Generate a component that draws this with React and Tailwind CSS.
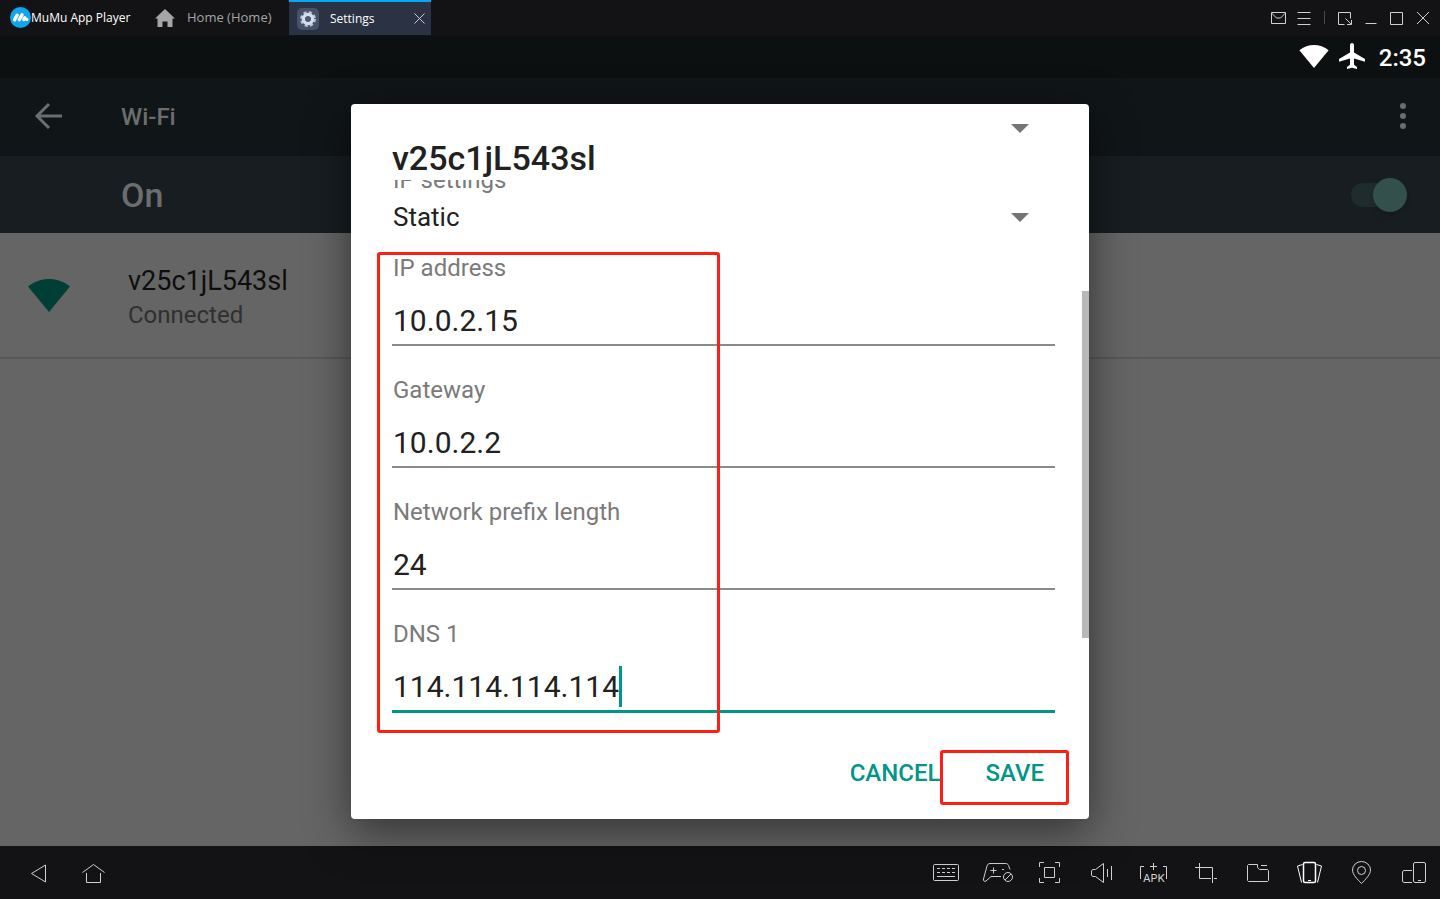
import { useState } from "react";

const iconProps = {
  fill: "none",
  stroke: "currentColor",
  strokeWidth: 1,
  "aria-hidden": true,
};

const windowButtons = [
  { label: "Messages", d: "M1.5 2.5h14v11h-14zM1.5 3l5 5h4l5-5" },
  { label: "Menu", d: "M1.5 2.5h13M1.5 8.5h13M1.5 14.5h13" },
  { label: "Mini mode", d: "M7.5 14.5h-6v-12h12v6M8.5 8.5l5.5 5.5M14.5 10v4.5H10" },
  { label: "Minimize", d: "M2.5 13.5h11" },
  { label: "Maximize", d: "M1.5 2.5h12v12h-12z" },
  { label: "Close", d: "M2 2l12 12M14 2L2 14" },
];

const tools = [
  {
    label: "Keyboard",
    icon: (
      <>
        <rect x="13.5" y="18.5" width="25" height="16" rx="1" />
        <path d="M17 22.5h18M17 26.5h18" strokeDasharray="3 2" />
        <path d="M17 30.5h18" />
      </>
    ),
  },
  {
    label: "Gamepad",
    icon: (
      <>
        <path d="M29 30.5H19L14 35c-1.5 1-3 0-2.500-2L15 20c.5-1.500 1.500-2.500 3-2.500h15c2 0 3 .5 3.500 2l1.500 4" />
        <path d="M18.500 24.500h6M21.500 21.500v6M30 23.500h2" />
        <circle cx="36" cy="31" r="4.500" />
        <path d="M33 34l6-6" />
      </>
    ),
  },
  {
    label: "Full screen",
    icon: (
      <path d="M15.500 21v-4.500H20M31 16.500h4.500V21M35.500 32v4.500H31M20 36.500h-4.500V32M20.500 21.500h10v10h-10z" />
    ),
  },
  {
    label: "Volume",
    icon: (
      <path d="M16.500 23.500h3l8-6v19l-8-6h-3l-1-1.500v-4zM31.500 23v8M35.500 20v14" />
    ),
  },
  {
    label: "Install APK",
    icon: (
      <>
        <path d="M16 20.500h-3.500V33M35 20.500h3.500V33M22 20.500h7M25.500 17v7" />
        <text x="26" y="36" textAnchor="middle" fontSize="11" fill="currentColor" stroke="none">
          APK
        </text>
      </>
    ),
  },
  {
    label: "Screenshot",
    icon: <path d="M15 21.500h17.500V37M19.500 17v15.500H31M34 32.500h3" />,
  },
  {
    label: "Shared folder",
    icon: (
      <>
        <path d="M16.500 18.500h9v3l2 2h8l1 1v10l-1 1h-19l-1-1v-15z" />
        <path d="M29 19.500h6" />
      </>
    ),
  },
  {
    label: "Shake",
    icon: (
      <>
        <rect x="19.500" y="16.500" width="12" height="20" rx="1.500" stroke="#fff" strokeWidth="1.500" />
        <path d="M18.500 18.500l-5 1.500 4 16.500M32.500 18.500l5 1.500-4 16.500M24 34.500h3" stroke="#fff" />
      </>
    ),
  },
  {
    label: "Location",
    icon: (
      <>
        <path d="M25.500 37.500c-4-4-9-9-9-13.500a9 8.500 0 0 1 18 0c0 4.500-5 9.500-9 13.500z" />
        <circle cx="25.500" cy="24.500" r="4" />
      </>
    ),
  },
  {
    label: "Rotate",
    icon: (
      <>
        <rect x="25.500" y="16.500" width="12" height="20" rx="1.500" />
        <path d="M24 24.500h-8l-1.500 1v10l1.500 1h8M30 34.500h3" />
      </>
    ),
  },
];

const Wifi = ({ className }) => (
  <svg viewBox="0 0 42 33" className={className} fill="currentColor" aria-hidden="true">
    <path d="M0 7.500C12-2.500 30-2.500 42 7.500L21 33z" />
  </svg>
);

const TitleBar = () => (
  <header className="flex h-9 items-start bg-[#131315] font-['Open_Sans',sans-serif] text-[12px] text-white">
    <div className="flex h-[35px] w-[127px] items-center pl-[10px] whitespace-nowrap">
      <svg viewBox="0 0 21 21" className="h-[21px] w-[21px] shrink-0" aria-hidden="true">
        <circle cx="10.500" cy="10.500" r="10.500" fill="#0fa5ef" />
        <path d="M4.500 12.800l2.600-4.600M9.300 12.800l2.700-5M13.800 12.500l1-1.800" stroke="#fff" strokeWidth="3.400" strokeLinecap="round" />
        <circle cx="16.800" cy="12.500" r="1.700" fill="#fff" />
      </svg>
      <span>MuMu App Player</span>
    </div>

    <nav className="flex h-[35px]">
      <button className="flex w-[162px] cursor-pointer items-center gap-3 pl-7 text-[13px] text-[#a5a5a5]">
        <svg viewBox="0 0 20 18" className="h-[18px] w-5" fill="currentColor" aria-hidden="true">
          <path d="M10 0l10 9.500h-2.500V18h-5v-5.500h-5V18h-5V9.500H0z" />
        </svg>
        <span>Home (Home)</span>
      </button>
      <div className="flex w-[142px] items-center border-t-2 border-[#03a9f4] bg-[#2b3244] pr-1 pl-2">
        <button className="flex flex-1 cursor-pointer items-center gap-[11px]">
          <svg viewBox="0 0 22 22" className="h-[22px] w-[22px]" aria-hidden="true">
            <rect width="22" height="22" rx="5" fill="#465269" />
            <circle cx="11" cy="11" r="6.500" fill="none" stroke="#b5c0d6" strokeWidth="3" strokeDasharray="3 2.100" />
            <circle cx="11" cy="11" r="4.500" fill="none" stroke="#d5dceb" strokeWidth="3.500" />
            <circle cx="11" cy="11" r="2.800" fill="#4c5870" />
          </svg>
          <span>Settings</span>
        </button>
        <button aria-label="Close tab" className="cursor-pointer p-[2px] text-[#c9ccd3]">
          <svg viewBox="0 0 11 11" className="h-[11px] w-[11px]" {...iconProps}>
            <path d="M.5.5l10 10M10.500.5l-10 10" />
          </svg>
        </button>
      </div>
    </nav>

    <div className="ml-auto flex h-[35px] items-center pr-1 text-[#d0d0d0]">
      {windowButtons.map((b, i) => (
        <div key={b.label} className="flex items-center">
          {i === 2 && <span className="mx-[7px] h-[13px] w-px bg-[#4a4a4c]" />}
          <button aria-label={b.label} className="flex w-[26px] cursor-pointer justify-center">
            <svg viewBox="0 0 16 16" className="h-4 w-4" {...iconProps}>
              <path d={b.d} />
            </svg>
          </button>
        </div>
      ))}
    </div>
  </header>
);

const StatusBar = () => (
  <div className="flex h-[42px] items-center justify-end gap-[14px] bg-[#0c1010] pr-[14px] text-white">
    <div className="flex items-center gap-[10px] pb-[2px]">
      <Wifi className="h-[23px] w-[30px]" />
      <svg viewBox="0 0 26 26" className="h-[26px] w-[26px]" fill="currentColor" aria-hidden="true">
        <path d="M13 0c-1.200 0-2 1-2 2.200v7.300L0 16v2.800L11 15.500v6.300l-3 2.200V26l5-1.300 5 1.300v-2l-3-2.200v-6.300l11 3.300V16l-11-6.500V2.200C15 1 14.200 0 13 0z" />
      </svg>
    </div>
    <span className="pt-[2px] text-[24px] leading-7 font-medium">2:35</span>
  </div>
);

const WifiPage = () => {
  const [on, setOn] = useState(true);

  return (
    <>
      <div className="flex h-[78px] items-center bg-[#101517] pr-[34px] pl-[34px] text-[#6b6d6e]">
        <button aria-label="Back" className="w-[87px] cursor-pointer pb-[2px]">
          <svg viewBox="0 0 28 28" className="h-7 w-7" {...iconProps} strokeWidth="3">
            <path d="M28 14H3M15 2L3 14l12 12" />
          </svg>
        </button>
        <h1 className="flex-1 text-[24px] leading-7 font-medium">Wi-Fi</h1>
        <button aria-label="More options" className="cursor-pointer pb-[2px]">
          <svg viewBox="0 0 6 28" className="h-7 w-[6px]" fill="currentColor" aria-hidden="true">
            <circle cx="3" cy="4" r="3" />
            <circle cx="3" cy="14" r="3" />
            <circle cx="3" cy="24" r="3" />
          </svg>
        </button>
      </div>

      <label className="flex h-[77px] cursor-pointer items-center justify-between bg-[#171d21] pr-[33px] pl-[121px] text-[#6b6d6e]">
        <span className="text-[34px] leading-10 font-medium">{on ? "On" : "Off"}</span>
        <input type="checkbox" className="peer sr-only" checked={on} onChange={() => setOn(!on)} />
        <span className="flex h-6 w-14 items-center rounded-full bg-[#1f2b2d] peer-checked:justify-end">
          <span className="h-[34px] w-[34px] rounded-full bg-[#34504c] shadow-md" />
        </span>
      </label>

      <a href="#network" className="flex h-[126px] items-center gap-[58px] border-b-2 border-[#585858] pl-7">
        <Wifi className="h-[33px] w-[42px] text-[#003f36]" />
        <span className="pt-1">
          <span className="block text-[27px] leading-8 text-[#0e0e0e]">v25c1jL543sl</span>
          <span className="mt-1 block text-[24px] leading-7 text-[#303030]">Connected</span>
        </span>
      </a>
    </>
  );
};

const Dropdown = ({ id, label, options, className }) => (
  <div className={className}>
    <div className="relative flex items-center">
      <select id={id} aria-label={label} className="h-8 w-full cursor-pointer appearance-none pr-12 pl-px text-[26px] leading-8 outline-none">
        {options.map((o) => (
          <option key={o}>{o}</option>
        ))}
      </select>
      <svg viewBox="0 0 18 9" className="pointer-events-none absolute right-[26px] h-[9px] w-[18px] text-[#757575]" fill="currentColor" aria-hidden="true">
        <path d="M0 0h18l-9 9z" />
      </svg>
    </div>
  </div>
);

const Field = ({ id, label, value, onChange, active }) => (
  <div>
    <label htmlFor={id} className="block pl-px text-[24px] leading-7 text-[#7a7a7a]">
      {label}
    </label>
    <div
      className={
        active
          ? "mt-[15px] flex h-[50px] items-center border-b-3 border-[#009688]"
          : "mt-[15px] flex h-[49px] items-center border-b-2 border-[#8a8a8a]"
      }
    >
      <input
        id={id}
        value={value}
        onChange={(e) => onChange(id, e.target.value)}
        className={
          active
            ? "field-sizing-content h-full pl-px text-[30px] caret-transparent outline-none"
            : "h-full w-full pl-px text-[30px] outline-none"
        }
      />
      {/* caret */}
      {active && <span className="h-[41px] w-[3px] bg-[#009688]" />}
    </div>
  </div>
);

const fields = [
  { id: "ip", label: "IP address" },
  { id: "gateway", label: "Gateway" },
  { id: "prefix", label: "Network prefix length" },
  { id: "dns1", label: "DNS 1", active: true },
];

const NetworkDialog = () => {
  const [values, setValues] = useState({
    ip: "10.0.2.15",
    gateway: "10.0.2.2",
    prefix: "24",
    dns1: "114.114.114.114",
  });

  const handleChange = (id, value) => setValues({ ...values, [id]: value });

  return (
    <section
      role="dialog"
      aria-labelledby="dialog-title"
      className="w-full max-w-[738px] rounded-[4px] bg-white text-[#212121] shadow-[0_12px_44px_rgba(0,0,0,0.5)]"
    >
      <div className="flex h-[76px] items-start justify-between pr-[34px] pl-[41px]">
        <h2 id="dialog-title" className="pt-[34px] text-[34px] leading-10 font-medium">
          v25c1jL543sl
        </h2>
        <Dropdown id="proxy" label="Proxy" options={[""]} className="mt-2 w-24" />
      </div>

      {/* scrolled a bit, the first label is cut by the title */}
      <div className="relative overflow-hidden pr-[34px] pb-6 pl-[41px]">
        <label htmlFor="ip-settings" className="-mt-[14px] block pl-px text-[24px] leading-7 text-[#7a7a7a]">
          IP settings
        </label>
        <Dropdown id="ip-settings" options={["Static", "DHCP"]} className="mt-[7px]" />

        <div className="relative mt-[21px] flex flex-col gap-[30px]">
          {fields.map((f) => (
            <Field key={f.id} {...f} value={values[f.id]} onChange={handleChange} />
          ))}
          <div className="pointer-events-none absolute -top-[2px] -bottom-5 -left-[15px] w-[343px] rounded-[3px] border-3 border-[#ff1e12]" />
        </div>

        <div className="absolute top-[111px] right-0 h-[347px] w-[7px] bg-[#b8b8b8]" />
      </div>

      <div className="flex h-[82px] items-start justify-end gap-[45px] pt-[22px] pr-[45px] text-[24px] leading-7 font-medium text-[#009688]">
        <button className="cursor-pointer">CANCEL</button>
        <button className="relative cursor-pointer">
          SAVE
          <span className="pointer-events-none absolute -top-[9px] -right-[25px] -bottom-[18px] -left-[45px] rounded-[3px] border-3 border-[#ff1e12]" />
        </button>
      </div>
    </section>
  );
};

const BottomBar = () => (
  <footer className="flex h-[53px] items-center justify-between bg-[#131315] font-[Inter,sans-serif] text-[#d0d0d0]">
    <div className="flex pl-[10px]">
      <button aria-label="Back" className="cursor-pointer">
        <svg viewBox="0 0 56 53" className="h-[53px] w-14" {...iconProps}>
          <path d="M21.500 27.500l14-8.500v17z" />
        </svg>
      </button>
      <button aria-label="Home" className="cursor-pointer">
        <svg viewBox="0 0 56 53" className="h-[53px] w-14" {...iconProps}>
          <path d="M16.500 26.500l11-8 11 8M20.500 27v9.500h14V27" />
        </svg>
      </button>
    </div>
    <div className="flex">
      {tools.map((t) => (
        <button key={t.label} aria-label={t.label} className="cursor-pointer">
          <svg viewBox="0 0 52 53" className="h-[53px] w-[52px]" {...iconProps}>
            {t.icon}
          </svg>
        </button>
      ))}
    </div>
  </footer>
);

function App() {
  return (
    <div className="flex min-h-screen flex-col bg-[#656565] font-[Roboto,sans-serif]">
      <TitleBar />
      <StatusBar />
      <main className="relative flex-1">
        <WifiPage />
        <div className="absolute inset-x-0 top-0 bottom-px flex items-center justify-center">
          <NetworkDialog />
        </div>
      </main>
      <BottomBar />
    </div>
  );
}

export default App;
